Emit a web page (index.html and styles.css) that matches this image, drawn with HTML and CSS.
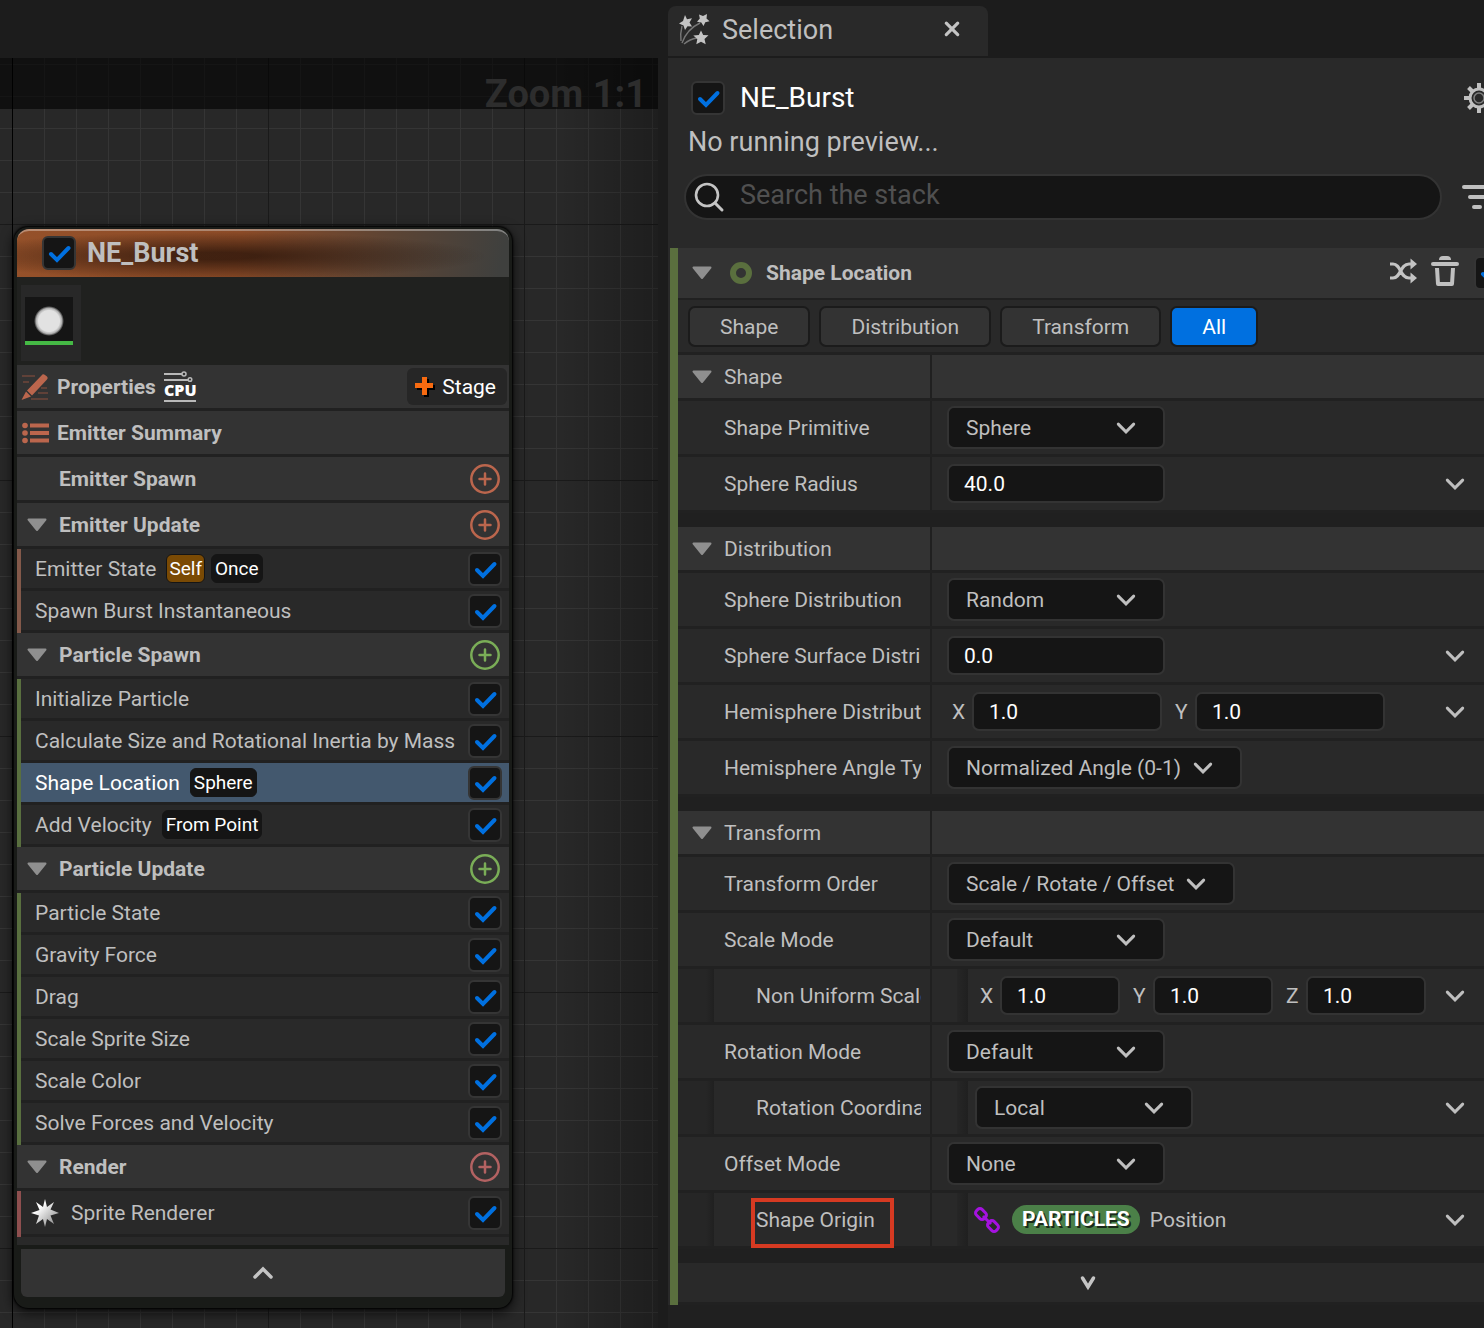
FILE: index.html
```html
<!DOCTYPE html>
<html lang="en">
<head>
<meta charset="utf-8">
<title>Niagara Emitter</title>
<link rel="stylesheet" href="styles.css">
</head>
<body>
<svg class="defs" aria-hidden="true">
  <defs>
    <symbol id="chev" viewBox="0 0 20 20"><path d="M3 6.500 10 13.500l7-7" fill="none" stroke="currentColor" stroke-width="2.700" stroke-linecap="round" stroke-linejoin="miter"/></symbol>
    <symbol id="tri" viewBox="0 0 20 14"><path d="M1.500 1.500h17L10 12z" fill="#8f8f8f" stroke="#8f8f8f" stroke-width="2" stroke-linejoin="round"/></symbol>
    <symbol id="plus" viewBox="0 0 30 30"><circle cx="15" cy="15" r="13.700" fill="none" stroke="currentColor" stroke-width="2.500"/><path d="M15 9.500v11M9.500 15h11" stroke="currentColor" stroke-width="2.500" stroke-linecap="round"/></symbol>
  </defs>
</svg>
<div class="app">
  <main class="graph">
    <div class="canvas">
      <div class="zoombar"><span>Zoom 1:1</span></div>
      <section class="node">
        <header class="node-head">
          <input type="checkbox" class="check" id="emitter" checked>
          <label for="emitter">NE_Burst</label>
        </header>
        <div class="thumbs"><div class="thumb"><div class="thumb-img"><i></i></div></div></div>
        <div class="group props">
          <svg class="ico-pencil" viewBox="0 0 28 28"><path d="M1 3h13M2 9h6M20 15h6M17 20h10M10 26h17" stroke="#70473b" stroke-width="1.500"/><path d="M20.500 2.500Q22 .500 24 2l2 1.500q1.500 1.500 0 3L11 22.500 6 17.500zM5 18.500l5 5L.500 27z" fill="#bb664d"/></svg>
          <h2>Properties</h2>
          <span class="cpu"><svg viewBox="0 0 32 11"><path d="M0 3h18M0 9h24" stroke="#b9b9b9" stroke-width="2"/><circle cx="20" cy="3" r="2" fill="none" stroke="#b9b9b9" stroke-width="1.500"/><circle cx="26" cy="8.500" r="1.800" fill="none" stroke="#b9b9b9" stroke-width="1.500"/></svg><b>CPU</b></span>
          <button class="stage"><svg viewBox="0 0 22 22"><path d="M8 1h5v6h6v5h-6v7H8v-7H1V7h7z" fill="#000" transform="translate(2 2)"/><path d="M8 1h5v6h6v5h-6v7H8v-7H1V7h7z" fill="#f76a10"/></svg>Stage</button>
        </div>
        <div class="group">
          <svg class="ico-list" viewBox="0 0 28 22"><g fill="#bb664d"><circle cx="4" cy="3.500" r="2.800"/><circle cx="4" cy="11" r="2.800"/><circle cx="4" cy="18.500" r="2.800"/><path d="M9 1.500h19v4H9zM9 9h19v4H9zM9 16.500h19v4H9z"/></g></svg>
          <h2>Emitter Summary</h2>
        </div>
        <div class="group stacked"><span class="fold"></span><h2>Emitter Spawn</h2><button class="add orange" aria-label="Add"><svg><use href="#plus"/></svg></button></div>
        <div class="group stacked"><span class="fold"><svg><use href="#tri"/></svg></span><h2>Emitter Update</h2><button class="add orange" aria-label="Add"><svg><use href="#plus"/></svg></button></div>
        <ul class="mods brown">
          <li><label for="m1">Emitter State</label><span class="tag self">Self</span><span class="tag">Once</span><input type="checkbox" class="check" id="m1" checked></li>
          <li><label for="m2">Spawn Burst Instantaneous</label><input type="checkbox" class="check" id="m2" checked></li>
        </ul>
        <div class="group stacked"><span class="fold"><svg><use href="#tri"/></svg></span><h2>Particle Spawn</h2><button class="add green" aria-label="Add"><svg><use href="#plus"/></svg></button></div>
        <ul class="mods olive">
          <li><label for="m3">Initialize Particle</label><input type="checkbox" class="check" id="m3" checked></li>
          <li><label for="m4">Calculate Size and Rotational Inertia by Mass</label><input type="checkbox" class="check" id="m4" checked></li>
          <li class="selected"><label for="m5">Shape Location</label><span class="tag">Sphere</span><input type="checkbox" class="check" id="m5" checked></li>
          <li><label for="m6">Add Velocity</label><span class="tag">From Point</span><input type="checkbox" class="check" id="m6" checked></li>
        </ul>
        <div class="group stacked"><span class="fold"><svg><use href="#tri"/></svg></span><h2>Particle Update</h2><button class="add green" aria-label="Add"><svg><use href="#plus"/></svg></button></div>
        <ul class="mods olive">
          <li><label for="m7">Particle State</label><input type="checkbox" class="check" id="m7" checked></li>
          <li><label for="m8">Gravity Force</label><input type="checkbox" class="check" id="m8" checked></li>
          <li><label for="m9">Drag</label><input type="checkbox" class="check" id="m9" checked></li>
          <li><label for="m10">Scale Sprite Size</label><input type="checkbox" class="check" id="m10" checked></li>
          <li><label for="m11">Scale Color</label><input type="checkbox" class="check" id="m11" checked></li>
          <li><label for="m12">Solve Forces and Velocity</label><input type="checkbox" class="check" id="m12" checked></li>
        </ul>
        <div class="group stacked"><span class="fold"><svg><use href="#tri"/></svg></span><h2>Render</h2><button class="add rose" aria-label="Add"><svg><use href="#plus"/></svg></button></div>
        <ul class="mods red">
          <li class="tall"><svg class="ico-burst" viewBox="0 0 28 28"><defs><linearGradient id="bg" x1="0" y1="0" x2="1" y2="1"><stop offset=".3" stop-color="#fff"/><stop offset="1" stop-color="#777"/></linearGradient></defs><path d="M14 0l2 8 7-5-3.500 7.500L28 14l-8.500 2.500L23 25l-7-5-2 8-2-8-7 5 3-8.500L0 14l8.500-3L5 3l7 5z" fill="url(#bg)"/></svg><label for="m13">Sprite Renderer</label><input type="checkbox" class="check" id="m13" checked></li>
        </ul>
        <div class="node-end"></div>
        <button class="collapse" aria-label="Collapse"><svg viewBox="0 0 22 16"><path d="M3 12l8-8 8 8" fill="none" stroke="currentColor" stroke-width="3.500" stroke-linecap="round"/></svg></button>
      </section>
    </div>
  </main>

  <aside class="side">
    <div class="tabs">
      <div class="tab">
        <svg class="ico-stars" viewBox="0 0 32 32"><g fill="none" stroke="#777" stroke-width="1.400"><path d="M4 12Q2 20 3 27M22 9Q9 15 4 29M19 24Q12 25 6 30"/></g><g fill="#c4c4c4"><path d="M7 1l2 4.200 5-1-2.500 4.300L14 12.500l-4.500-.3L7 16l-1.500-4.500L1 9.500l4-2.500z"/><path d="M29 0l-.5 4.500 3 2.800-4.200 1L25.500 12l-2.200-3.600-4.300-.6 2.800-3.200L21 .500l4 1.600z"/><path d="M23 16.500l2.200 4.500 5.300.3-4 3.700 1.200 5.300-4.700-2.600-4.700 2.600 1-5.300-4-3.500 5.500-.5z"/></g></svg>
        <span>Selection</span>
        <button class="close" aria-label="Close"><svg viewBox="0 0 14 14"><path d="M2 1l10 10M12 1L2 11" stroke="#c4c4c4" stroke-width="2.800" stroke-linecap="round"/></svg></button>
      </div>
    </div>
    <div class="panel">
      <div class="title">
        <input type="checkbox" class="check" id="sel" checked><label for="sel">NE_Burst</label>
        <button class="icon gear" aria-label="Settings"><svg viewBox="0 0 30 30"><g stroke="#c0c0c0" stroke-width="4"><path d="M15 0v6M15 24v6M0 15h6M24 15h6M4.500 4.500l4 4M21.500 21.500l4 4M4.500 25.500l4-4M21.500 8.500l4-4"/></g><circle cx="15" cy="15" r="9" fill="none" stroke="#c0c0c0" stroke-width="3"/><circle cx="15" cy="15" r="5" fill="none" stroke="#808080" stroke-width="1.500"/></svg></button>
      </div>
      <p class="note">No running preview...</p>
      <div class="searchrow">
        <div class="search">
          <svg viewBox="0 0 30 30"><circle cx="13" cy="13" r="11" fill="none" stroke="#c4c4c4" stroke-width="2.600"/><path d="M21 21l7 7" stroke="#c4c4c4" stroke-width="3" stroke-linecap="round"/></svg>
          <input type="text" placeholder="Search the stack" aria-label="Search the stack">
        </div>
        <button class="icon filter" aria-label="Filter"><svg viewBox="0 0 30 30"><path d="M2 5h26M8 15h14M12 25h6" stroke="#c0c0c0" stroke-width="4" stroke-linecap="round"/></svg></button>
      </div>

      <div class="stack">
        <div class="mod-head">
          <svg class="tri"><use href="#tri"/></svg><i class="ring"></i><h1>Shape Location</h1>
          <button class="icon shuffle" aria-label="Shuffle"><svg viewBox="0 0 28 26"><g fill="none" stroke="#c4c4c4" stroke-width="3.200"><path d="M1 6h3c8 0 7 14 16 14h2M1 20h3c8 0 7-14 16-14h2"/></g><path d="M21.500 .500L28 6l-6.500 5.500zM21.500 14.500l6.500 5.500-6.500 5.500z" fill="#c4c4c4"/></svg></button>
          <button class="icon trash" aria-label="Delete"><svg viewBox="0 0 28 30"><path d="M8 4q0-4 4-4h4q4 0 4 4z" fill="#c0c0c0"/><path d="M2 8h24" stroke="#c0c0c0" stroke-width="4" stroke-linecap="round"/><path d="M6 12l1 16h14l1-16" fill="none" stroke="#c0c0c0" stroke-width="4" stroke-linejoin="round"/></svg></button>
          <input type="checkbox" class="check" aria-label="Enabled" checked>
        </div>
        <div class="filters"><button>Shape</button><button>Distribution</button><button>Transform</button><button class="on">All</button></div>

        <section class="cat">
          <div class="cat-head"><h3><svg class="tri"><use href="#tri"/></svg>Shape</h3></div>
          <div class="row"><label for="p1">Shape Primitive</label><div class="val"><span class="drop"><select id="p1"><option>Sphere</option></select><svg><use href="#chev"/></svg></span></div></div>
          <div class="row"><label for="p2">Sphere Radius</label><div class="val"><input class="num" id="p2" value="40.0"><button class="more" aria-label="More"><svg><use href="#chev"/></svg></button></div></div>
        </section>

        <section class="cat">
          <div class="cat-head"><h3><svg class="tri"><use href="#tri"/></svg>Distribution</h3></div>
          <div class="row"><label for="p3">Sphere Distribution</label><div class="val"><span class="drop"><select id="p3"><option>Random</option></select><svg><use href="#chev"/></svg></span></div></div>
          <div class="row"><label for="p4">Sphere Surface Distribution</label><div class="val"><input class="num" id="p4" value="0.0"><button class="more" aria-label="More"><svg><use href="#chev"/></svg></button></div></div>
          <div class="row"><label for="p5">Hemisphere Distribution</label><div class="val axes"><label for="p5">X</label><input class="num" id="p5" value="1.0"><label for="p5y">Y</label><input class="num" id="p5y" value="1.0"><button class="more" aria-label="More"><svg><use href="#chev"/></svg></button></div></div>
          <div class="row"><label for="p6">Hemisphere Angle Type</label><div class="val"><span class="drop fit"><select id="p6"><option>Normalized Angle (0-1)</option></select><svg><use href="#chev"/></svg></span></div></div>
        </section>

        <section class="cat">
          <div class="cat-head"><h3><svg class="tri"><use href="#tri"/></svg>Transform</h3></div>
          <div class="row"><label for="p7">Transform Order</label><div class="val"><span class="drop fit"><select id="p7"><option>Scale / Rotate / Offset</option></select><svg><use href="#chev"/></svg></span></div></div>
          <div class="row"><label for="p8">Scale Mode</label><div class="val"><span class="drop"><select id="p8"><option>Default</option></select><svg><use href="#chev"/></svg></span></div></div>
          <div class="row sub"><label for="p9">Non Uniform Scale</label><div class="val axes three"><label for="p9">X</label><input class="num" id="p9" value="1.0"><label for="p9y">Y</label><input class="num" id="p9y" value="1.0"><label for="p9z">Z</label><input class="num" id="p9z" value="1.0"><button class="more" aria-label="More"><svg><use href="#chev"/></svg></button></div></div>
          <div class="row"><label for="p10">Rotation Mode</label><div class="val"><span class="drop"><select id="p10"><option>Default</option></select><svg><use href="#chev"/></svg></span></div></div>
          <div class="row sub"><label for="p11">Rotation Coordinate Space</label><div class="val"><span class="drop"><select id="p11"><option>Local</option></select><svg><use href="#chev"/></svg></span><button class="more" aria-label="More"><svg><use href="#chev"/></svg></button></div></div>
          <div class="row"><label for="p12">Offset Mode</label><div class="val"><span class="drop"><select id="p12"><option>None</option></select><svg><use href="#chev"/></svg></span></div></div>
          <div class="row sub"><div class="name marked">Shape Origin</div><div class="val linked"><svg class="ico-link" viewBox="0 0 26 26"><g fill="none" stroke="#a512e0" stroke-width="3"><rect x="-5.500" y="-4" width="11" height="8" rx="3" transform="translate(7 7) rotate(45)"/><rect x="-5.500" y="-4" width="11" height="8" rx="3" transform="translate(19 19) rotate(45)"/><path d="M9 9l8 8"/></g></svg><span class="pill">PARTICLES</span><span>Position</span><button class="more" aria-label="More"><svg><use href="#chev"/></svg></button></div></div>
        </section>
        <button class="expand" aria-label="Expand"><svg viewBox="0 0 16 14"><path d="M2.500 2L8 11l5.500-9" fill="none" stroke="#c4c4c4" stroke-width="3.500" stroke-linecap="round"/></svg></button>
      </div>
    </div>
  </aside>
</div>
</body>
</html>
```
FILE: styles.css
```css
* { box-sizing: border-box; }
body {
  margin: 0;
  background: #1c1c1c;
  color: #bfbfbf;
  font: 21px/24px Roboto, "Liberation Sans", sans-serif;
}
h1, h2, h3, p, ul { margin: 0; padding: 0; font-size: inherit; }
ul { list-style: none; }
button { padding: 0; border: 0; background: none; color: inherit; font: inherit; }
svg { display: block; flex: none; overflow: visible; }
.defs { position: absolute; width: 0; height: 0; }

.app {
  display: grid;
  grid-template-columns: minmax(0, 668fr) minmax(0, 816fr);
  min-height: 100vh;
  overflow: hidden;
}

/* Graph */
.graph { display: flex; padding: 58px 10px 0 0; }
.canvas {
  flex: 1;
  min-width: 0;
  background-color: #282828;
  background-image:
    linear-gradient(90deg, transparent 85%, rgba(0, 0, 0, .25)),
    linear-gradient(#000, #000),
    linear-gradient(90deg, #1a1a1a 1px, transparent 1px),
    linear-gradient(#1a1a1a 1px, transparent 1px),
    linear-gradient(90deg, #353535 1px, transparent 1px),
    linear-gradient(#353535 1px, transparent 1px);
  background-size: auto, 1px 100%, 256px 256px, 256px 256px, 32px 32px, 32px 32px;
  background-position: 0 0, 12px 0, 12px 0, 0 166px, 12px 0, 0 6px;
  background-repeat: no-repeat, no-repeat, repeat, repeat, repeat, repeat;
}
.zoombar {
  display: flex;
  justify-content: flex-end;
  height: 51px;
  padding-right: 11px;
  background: rgba(0, 0, 0, .6);
  color: #2d2d2d;
  font-size: 38px;
  font-weight: 700;
  line-height: 72px;
}
.node {
  width: 498px;
  margin: 118px 0 0 14px;
  padding: 2px 3px 11px;
  border-radius: 14px;
  background: #191b18;
  box-shadow: 0 0 2px 1px #000, 0 4px 12px 2px rgba(0, 0, 0, .6);
}
.node-head {
  display: flex;
  align-items: center;
  gap: 11px;
  height: 48px;
  padding: 0 0 2px 25px;
  border-top: 2px solid rgba(255, 255, 255, .35);
  border-radius: 12px 12px 0 0;
  background:
    radial-gradient(ellipse 270px 24px at 200px 25px, rgba(24, 10, 4, .65) 15%, transparent),
    linear-gradient(100deg, #95512a 0, #8c4b27 45%, #5c4434 75%, #3f403e 98%);
  font-size: 27px;
  font-weight: 700;
}
.check {
  flex: none;
  appearance: none;
  width: 34px;
  height: 34px;
  margin: 0;
  border: 2px solid #353535;
  border-radius: 6px;
  background: #151515 url("data:image/svg+xml,%3Csvg xmlns='http://www.w3.org/2000/svg' viewBox='0 0 30 30'%3E%3Cpath d='M7 16l6 6 11.500-12' fill='none' stroke='%230070e0' stroke-width='4' stroke-linecap='round'/%3E%3C/svg%3E") center / 30px;
}
.thumbs { height: 88px; padding: 8px 4px; background: #20211f; }
.thumb { width: 60px; height: 76px; padding: 12px 4px; background: #282828; }
.thumb-img {
  display: grid;
  place-items: center;
  width: 48px;
  height: 48px;
  padding-top: 4px;
  border-bottom: 4px solid #45b945;
  background: #151515;
}
.thumb-img i { width: 30px; height: 30px; border-radius: 50%; background: radial-gradient(closest-side, #e2e2e2 70%, #b0b0b0 85%, transparent); }

.group {
  display: flex;
  align-items: center;
  height: 46px;
  padding: 0 8px 0 4px;
  border-bottom: 3px solid #212121;
  background: #333;
}
.ico-pencil { width: 28px; height: 28px; margin-right: 8px; }
.ico-list { width: 28px; height: 22px; margin-right: 8px; }
.cpu {
  width: 32px;
  height: 31px;
  margin-left: 8px;
  border-bottom: 2px solid #b9b9b9;
  color: #fff;
  font: 700 16px/17px "Open Sans", sans-serif;
  text-align: center;
}
.cpu svg { width: 32px; height: 11px; }
.cpu b { display: block; }
.props { padding-right: 2px; }
.stage {
  display: flex;
  align-items: center;
  gap: 6px;
  height: 37px;
  margin-left: auto;
  padding: 0 11px 0 7px;
  border-radius: 6px;
  background: #262626;
  color: #fff;
}
.stage svg { width: 22px; height: 22px; }
.stacked { padding-left: 10px; }
.fold { flex: none; width: 32px; }
.fold svg, .tri { width: 20px; height: 14px; }
.add { margin-left: auto; padding-right: 1px; }
.add svg { width: 30px; height: 30px; }
.orange { color: #bb664d; }
.green { color: #7aad57; }
.rose { color: #b36262; }

.mods { border-left: 4px solid; }
.brown { border-color: #83594a; }
.olive { border-color: #596f3f; }
.red { border-color: #8e4f4f; }
.mods li {
  display: flex;
  align-items: center;
  gap: 6px;
  height: 42px;
  padding: 0 7px 0 14px;
  border-bottom: 3px solid #212121;
  background: #292929;
  white-space: nowrap;
}
.mods .tall { height: 46px; padding-left: 10px; gap: 12px; }
.mods label + .tag { margin-left: 4px; }
.mods .check { margin-left: auto; }
.mods .selected { background: #43586e; color: #fff; }
.mods .tag {
  padding: 0 3px;
  border: 1px solid #151515;
  border-radius: 6px;
  background: #151515;
  color: #fff;
  font-size: 19px;
  line-height: 27px;
}
.mods .self { padding: 0 2px; background: #7a4a04; }
.ico-burst { width: 28px; height: 28px; }
.node-end { height: 8px; background: #292929; }
.collapse {
  display: grid;
  place-items: center;
  width: 484px;
  height: 48px;
  margin: 4px 4px 0;
  border-radius: 0 0 6px 6px;
  background: #333;
  color: #c4c4c4;
}
.collapse svg { width: 22px; height: 16px; }

/* Selection panel */
.side { display: flex; flex-direction: column; }
.tabs { height: 58px; padding-top: 6px; }
.tab {
  display: flex;
  align-items: center;
  width: 320px;
  height: 50px;
  padding: 0 28px 3px 10px;
  border-radius: 8px 8px 0 0;
  background: #292929;
  font-size: 27px;
}
.ico-stars { width: 32px; height: 32px; margin-right: 12px; }
.close { margin-left: auto; }
.close svg { width: 16px; height: 16px; }
.panel { flex: 1; overflow: hidden; padding: 22px 0 23px; background: linear-gradient(#292929 1247px, #202020 0); }
.title { display: flex; align-items: center; height: 36px; padding-left: 23px; gap: 15px; color: #fff; font-size: 28px; }
.icon { flex: none; }
.icon svg { width: 30px; height: 30px; }
.gear { margin-left: auto; margin-right: -10px; }
.filter { margin-right: -8px; }
.note { padding: 10px 20px 0; font-size: 27px; line-height: 32px; }
.searchrow { display: flex; align-items: center; gap: 20px; margin-top: 16px; padding-left: 16px; }
.search {
  display: flex;
  flex: 1;
  align-items: center;
  gap: 16px;
  height: 46px;
  padding: 0 20px 0 8px;
  border: 2px solid #333;
  border-radius: 23px;
  background: #151515;
}
.search svg { width: 30px; height: 30px; }
.search input {
  flex: 1;
  min-width: 0;
  padding: 0 0 4px;
  border: 0;
  background: none;
  color: #fff;
  font: 27px/32px Roboto, sans-serif;
}
.search input::placeholder { color: #505050; }

.stack { margin: 28px 0 0 2px; border-left: 8px solid #5a6f3e; background: #202020; }
.mod-head {
  display: flex;
  align-items: center;
  height: 52px;
  padding-left: 14px;
  border-bottom: 2px solid #212121;
  background: #333;
}
.ring { width: 22px; height: 22px; margin: 0 14px 0 18px; border: 6px solid #5a6f3e; border-radius: 50%; }
.mod-head .icon { padding-bottom: 4px; }
.shuffle { margin: 0 14px 0 auto; }
.shuffle svg { width: 28px; height: 26px; }
.trash { margin-right: 15px; }
.trash svg { width: 28px; height: 30px; }
.mod-head .check { margin-right: -24px; }
.filters { display: flex; gap: 9px; height: 55px; padding: 6px 10px; border-bottom: 3px solid #212121; background: #292929; }
.filters button {
  height: 41px;
  padding: 0 30px;
  border: 2px solid #1b1b1b;
  border-radius: 7px;
  background: #333;
}
.filters .on { background: #0070e0; color: #fff; }

.cat { padding-bottom: 14px; }
.cat-head, .row {
  display: grid;
  grid-template-columns: 254px minmax(0, 1fr);
  height: 56px;
  border-bottom: 3px solid #212121;
  background: linear-gradient(90deg, transparent 252px, #202020 252px, #202020 254px, transparent 254px) #292929;
}
.cat-head { height: 46px; background-color: #333; }
h3 { display: flex; align-items: center; gap: 12px; padding-left: 14px; font-weight: 400; }
.row > label, .name {
  align-self: center;
  margin: 0 11px 0 46px;
  overflow: hidden;
  white-space: nowrap;
}
.val { display: flex; align-items: center; padding: 0 18px 0 15px; }
.drop { display: grid; width: 218px; height: 43px; }
.drop select, .drop svg { grid-area: 1 / 1; }
.drop svg, .more svg { width: 22px; height: 22px; }
.drop svg { place-self: center end; margin-right: 28px; pointer-events: none; }
.fit { width: auto; }
select, .num {
  appearance: none;
  width: 218px;
  margin: 0;
  border: 2px solid #333;
  border-radius: 7px;
  background: #151515;
  color: inherit;
  font: inherit;
}
select { padding: 0 17px; }
.fit select { width: auto; padding-right: 58px; }
.num { height: 39px; padding: 0 15px; color: #fff; }
.more { margin-left: auto; }
.axes { padding-left: 20px; }
.axes label { flex: none; width: 20px; }
.axes .num { width: 190px; }
.axes .num + label { margin-left: 13px; }
.three .num { width: 120px; }
.sub {
  background:
    linear-gradient(90deg, transparent 252px, #202020 252px, #202020 254px, transparent 254px),
    linear-gradient(90deg, #262626 28px, #202020 36px, transparent 36px, transparent 279px, #262626 279px, #202020 290px, transparent 290px) #292929;
}
.sub > label { margin-left: 78px; }
.sub .val { padding-left: 43px; }
.sub .axes { padding-left: 48px; }
.name.marked {
  align-self: start;
  justify-self: start;
  height: 50px;
  margin: 5px 0 0 73px;
  padding: 6px 15px 0 1px;
  border: 4px solid #d63a22;
}
.sub .linked { padding-left: 42px; padding-bottom: 2px; }
.ico-link { width: 26px; height: 26px; margin-right: 12px; }
.pill {
  margin-right: 10px;
  padding: 0 10px;
  border-radius: 15px;
  background: #4b8048;
  color: #fff;
  font-weight: 700;
  line-height: 29px;
  text-shadow: 2px 2px 0 #1a2a1a;
}
.expand {
  display: grid;
  place-items: center;
  width: 100%;
  height: 42px;
  padding-left: 13px;
  border-bottom: 3px solid #212121;
  background: #292929;
}
.expand svg { width: 16px; height: 14px; }
```
